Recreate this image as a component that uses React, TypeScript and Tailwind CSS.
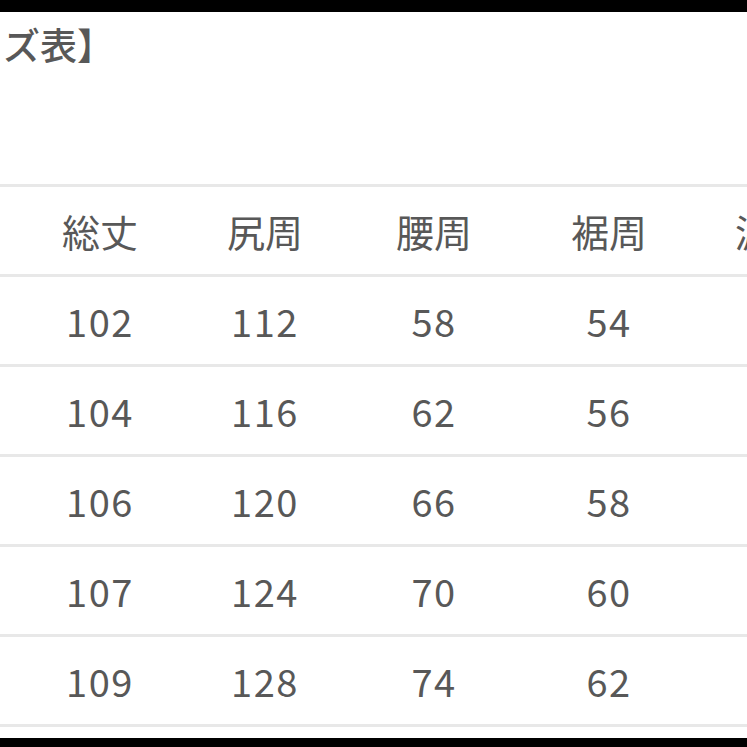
const headers = ["総丈", "尻周", "腰周", "裾周", "渡り"];

const rows = [
  ["102", "112", "58", "54", ""],
  ["104", "116", "62", "56", ""],
  ["106", "120", "66", "58", ""],
  ["107", "124", "70", "60", ""],
  ["109", "128", "74", "62", ""],
];

// column widths picked so the centres line up with the screenshot
const colClass = ["w-[170px]", "w-[160px]", "w-[178px]", "w-[172px]", "w-[156px]"];

function Row({ cells, digits }: { cells: string[]; digits?: boolean }) {
  return (
    <div className="flex h-[90px] shrink-0 items-center border-t-[3px] border-[#e8e8e8] pl-[15px]">
      {cells.map((c, i) => (
        <div
          key={i}
          className={`${colClass[i]} shrink-0 text-center ${digits ? "tracking-[1.5px]" : ""}`}
        >
          {c}
        </div>
      ))}
    </div>
  );
}

export default function App() {
  return (
    <div
      className="flex h-[747px] w-[747px] flex-col overflow-hidden bg-white text-[#585858]"
      style={{ fontFamily: '"Noto Sans CJK JP", "Noto Sans", sans-serif' }}
    >
      <div className="h-[12px] shrink-0 bg-black" />

      <div className="h-[172px] shrink-0 pl-[3px] pt-[10px] text-[37px] leading-[44px] font-medium">
        ズ表】
      </div>

      <div className="flex flex-col text-[38px] leading-none font-normal">
        <Row cells={headers} />
        {rows.map((r, i) => (
          <Row key={i} cells={r} digits />
        ))}
        <div className="border-t-[3px] border-[#e8e8e8]" />
      </div>

      <div className="flex-1 bg-white" />
      <div className="h-[9px] shrink-0 bg-black" />
    </div>
  );
}
